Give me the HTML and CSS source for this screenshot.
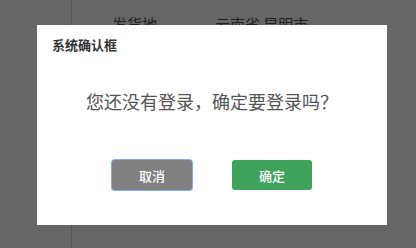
FILE: index.html
```html
<!DOCTYPE html>
<html lang="zh-CN">
<head>
    <meta charset="UTF-8">
    <meta name="viewport" content="width=device-width, initial-scale=1.0">
    <title>系统确认框</title>
    <link rel="stylesheet" href="styles.css">
</head>
<body>
    <div class="page">
        <div class="side"></div>
        <div class="content">
            <div class="info-row">
                <span class="info-label">发货地</span>
                <span class="info-value">云南省 昆明市</span>
            </div>
        </div>
    </div>

    <div class="mask">
        <div class="dialog">
            <div class="dialog-title">系统确认框</div>
            <div class="dialog-msg">您还没有登录，确定要登录吗？</div>
            <div class="dialog-btns">
                <button class="btn btn-cancel">取消</button>
                <button class="btn btn-ok">确定</button>
            </div>
        </div>
    </div>
</body>
</html>
```

FILE: styles.css
```css
body {
    margin: 0;
    font-family: "Noto Sans CJK SC", "Liberation Sans", sans-serif;
    background-color: #fff;
    width: 416px;
    height: 248px;
    overflow: hidden;
}
.page {
    display: flex;
    height: 248px;
}
.side {
    width: 71px;
    border-right: 1px solid #d4d4d4;
}
.content {
    flex: 1;
    padding: 13px 0 0 40px;
}
.info-row {
    display: flex;
    font-size: 15px;
    line-height: 22px;
    color: #555;
}
.info-label {
    width: 103px;
}
.mask {
    position: fixed;
    top: 0;
    left: 0;
    right: 0;
    bottom: 0;
    background: rgba(0,0,0,0.6);
    padding: 25px 0 0 37px;
}
.dialog {
    width: 350px;
    height: 200px;
    background: #fff;
    display: flex;
    flex-direction: column;
}
.dialog-title {
    padding: 10px 15px;
    font-size: 13px;
    line-height: 20px;
    font-weight: bold;
    color: #333;
}
.dialog-msg {
    margin-top: 24px;
    text-align: center;
    font-size: 18px;
    line-height: 24px;
    color: #555;
}
.dialog-btns {
    margin-top: 47px;
    display: flex;
    justify-content: center;
    gap: 40px;
}
.btn {
    width: 80px;
    height: 30px;
    border: none;
    border-radius: 3px;
    color: #fff;
    font-family: "Noto Sans CJK SC", "Liberation Sans", sans-serif;
    font-size: 13px;
    font-weight: 500;
    cursor: pointer;
}
.btn-cancel {
    background-color: #808080;
    box-shadow: 0 0 0 1px #82a9f2;
}
.btn-ok {
    background-color: #40a35b;
}
```
